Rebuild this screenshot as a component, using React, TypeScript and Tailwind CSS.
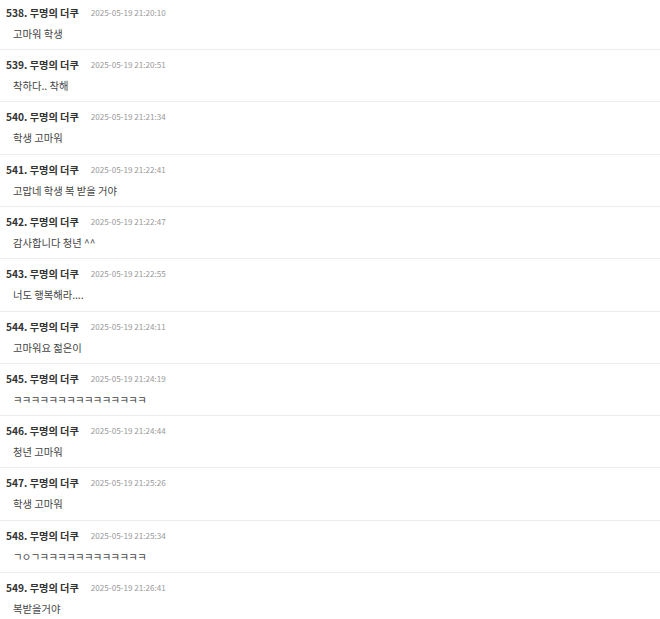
const rows: [string, string, string][] = [
  ["538", "2025-05-19 21:20:10", "고마워 학생"],
  ["539", "2025-05-19 21:20:51", "착하다.. 착해"],
  ["540", "2025-05-19 21:21:34", "학생 고마워"],
  ["541", "2025-05-19 21:22:41", "고맙네 학생 복 받을 거야"],
  ["542", "2025-05-19 21:22:47", "감사합니다 청년 ^^"],
  ["543", "2025-05-19 21:22:55", "너도 행복해라...."],
  ["544", "2025-05-19 21:24:11", "고마워요 젊은이"],
  ["545", "2025-05-19 21:24:19", "ㅋㅋㅋㅋㅋㅋㅋㅋㅋㅋㅋㅋㅋㅋㅋ"],
  ["546", "2025-05-19 21:24:44", "청년 고마워"],
  ["547", "2025-05-19 21:25:26", "학생 고마워"],
  ["548", "2025-05-19 21:25:34", "ㄱㅇㄱㅋㅋㅋㅋㅋㅋㅋㅋㅋㅋㅋㅋ"],
  ["549", "2025-05-19 21:26:41", "복받을거야"],
];

const tall = new Set([2, 5, 9]);

export default function App() {
  return (
    <div
      className="w-[660px] h-[619px] overflow-hidden bg-white"
      style={{ fontFamily: '"Noto Sans CJK KR", "Noto Sans", sans-serif' }}
    >
      <div className="-mt-[2px]">
        {rows.map(([n, d, c], i) => (
          <div
            key={n}
            className={
              tall.has(i)
                ? "border-b border-[#ececec] pt-[7px] pb-[8px]"
                : "border-b border-[#ececec] pt-[7px] pb-[7px]"
            }
          >
            <div className="flex items-center h-4 pl-[6px]">
              <span className="text-[10.2px] font-bold text-[#333] leading-4">{n}. 무명의 더쿠</span>
              <span className="ml-[12px] text-[8.1px] text-[#999] leading-4">{d}</span>
            </div>
            <div className="mt-[5px] h-4 pl-[13px] text-[10.3px] text-[#444] leading-4">
              <span className={c.startsWith("ㅋ") || c.startsWith("ㄱ") ? "tracking-[-0.6px]" : ""}>{c}</span>
            </div>
          </div>
        ))}
      </div>
    </div>
  );
}
